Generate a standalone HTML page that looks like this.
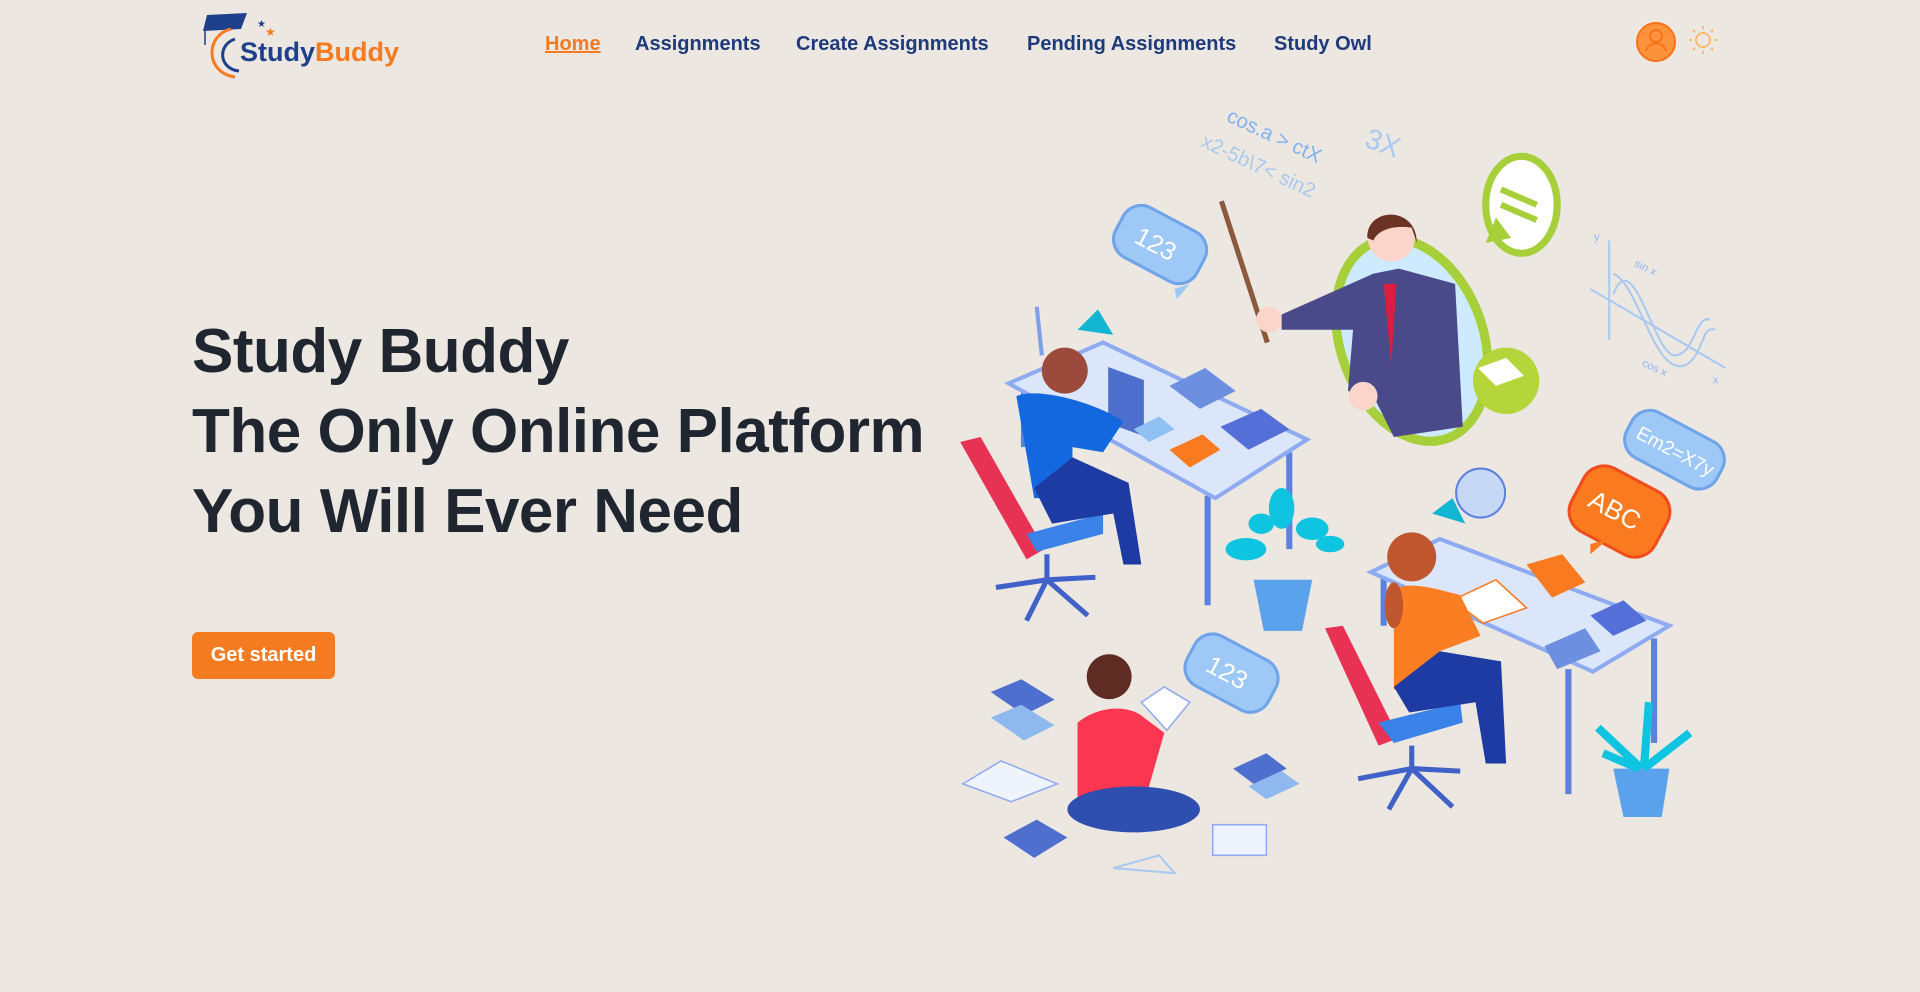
<!DOCTYPE html>
<html><head><meta charset="utf-8"><style>
*{margin:0;padding:0;box-sizing:border-box}
body{width:1920px;height:992px;background:#ece7e1;font-family:"Liberation Sans",sans-serif;position:relative;overflow:hidden}
.nav a{position:absolute;top:33px;font-size:20px;font-weight:bold;color:#1e3a7b;text-decoration:none;white-space:nowrap}
h1{position:absolute;left:192px;top:312px;font-size:62px;line-height:80px;font-weight:bold;color:#1f2630;letter-spacing:-0.5px}
.btn{position:absolute;left:192px;top:632px;width:143px;height:47px;background:#f47b20;border-radius:6px;color:#fff;font-weight:bold;font-size:20px;text-align:center;line-height:47px}
</style></head><body>
<svg style="position:absolute;left:195px;top:5px" width="220" height="80" viewBox="0 0 220 80">
<polygon points="12,10 52,8 46,24 8,26" fill="#1e3f8a"/>
<line x1="10" y1="26" x2="10" y2="40" stroke="#1e3f8a" stroke-width="1.5"/>
<path d="M36 24 C10 30 10 68 40 72" stroke="#f47b20" stroke-width="3" fill="none"/>
<path d="M40 34 C22 40 24 64 44 66" stroke="#1e3f8a" stroke-width="3" fill="none"/>
<text x="62" y="22" fill="#1e3f8a" font-size="10">★</text>
<text x="70" y="31" fill="#f47b20" font-size="12">★</text>
<text x="45" y="56" font-size="27" font-weight="bold" fill="#1e3f8a" font-family="Liberation Sans">Study<tspan fill="#f47b20">Buddy</tspan></text>
</svg>
<div class="nav">
<a style="left:545px;color:#f47b20;text-decoration:underline">Home</a>
<a style="left:635px">Assignments</a>
<a style="left:796px">Create Assignments</a>
<a style="left:1027px">Pending Assignments</a>
<a style="left:1274px">Study Owl</a>
</div>
<svg style="position:absolute;left:1630px;top:16px" width="90" height="52" viewBox="0 0 90 52">
<circle cx="26" cy="26" r="19" fill="#fb923c" stroke="#f97316" stroke-width="2"/>
<circle cx="26" cy="20" r="6" fill="none" stroke="#f97316" stroke-width="2"/>
<path d="M16 35 C18 25 34 25 36 35" fill="none" stroke="#f97316" stroke-width="2"/>
<circle cx="73" cy="24" r="7" fill="none" stroke="#fdba74" stroke-width="2"/>
<g stroke="#fdba74" stroke-width="2"><line x1="73" y1="10" x2="73" y2="13"/><line x1="73" y1="35" x2="73" y2="38"/><line x1="59" y1="24" x2="62" y2="24"/><line x1="84" y1="24" x2="87" y2="24"/><line x1="63" y1="14" x2="65" y2="16"/><line x1="81" y1="32" x2="83" y2="34"/><line x1="63" y1="34" x2="65" y2="32"/><line x1="81" y1="16" x2="83" y2="14"/></g>
</svg>
<h1>Study Buddy<br>The Only Online Platform<br>You Will Ever Need</h1>
<div class="btn">Get started</div>

<svg style="position:absolute;left:950px;top:90px" width="800" height="800" viewBox="0 0 1568 1568" font-family="Liberation Sans">
<g fill="#7fb2ee" font-size="40">
<text x="540" y="60" transform="rotate(25 540 60)">cos.a &gt; ctX</text>
<text x="490" y="110" transform="rotate(25 490 110)" fill="#a9c9f0">x2-5b\7&lt; sin2</text>
<text x="810" y="110" font-size="56" transform="rotate(20 810 110)" fill="#a9c9f0">3X</text>
</g>
<g stroke="#a9c9f0" stroke-width="4" fill="none">
<line x1="1292" y1="295" x2="1292" y2="490"/><line x1="1255" y1="390" x2="1520" y2="545"/>
<path d="M1300 400 C1340 300 1380 520 1420 520 C1460 520 1460 440 1490 450"/>
<path d="M1300 360 C1350 380 1380 560 1440 540 C1480 520 1470 460 1500 470"/>
</g>
<g fill="#8fb9ee" font-size="22"><text x="1262" y="295">y</text><text x="1340" y="345" transform="rotate(25 1340 345)">sin x</text><text x="1355" y="540" transform="rotate(25 1355 540)">cos x</text><text x="1495" y="575">x</text></g>
<g transform="rotate(28 405 305)"><rect x="320" y="245" width="180" height="110" rx="40" fill="#9ec8f5" stroke="#6fa4ea" stroke-width="6"/><text x="360" y="320" font-size="50" fill="#fff">123</text></g>
<g transform="rotate(28 545 1145)"><rect x="460" y="1085" width="180" height="110" rx="40" fill="#9ec8f5" stroke="#6fa4ea" stroke-width="6"/><text x="500" y="1160" font-size="50" fill="#fff">123</text></g>
<g transform="rotate(28 1420 705)"><rect x="1320" y="655" width="200" height="100" rx="40" fill="#9ec8f5" stroke="#6fa4ea" stroke-width="6"/><text x="1340" y="720" font-size="38" fill="#fff">Em2=X7y</text></g>
<g transform="rotate(28 1310 825)"><rect x="1220" y="755" width="185" height="140" rx="45" fill="#f97a1f" stroke="#f24c1c" stroke-width="6"/><text x="1250" y="845" font-size="52" fill="#fff">ABC</text></g>
<polygon points="440,390 470,380 445,410" fill="#9ec8f5"/>
<polygon points="1255,890 1290,880 1255,910" fill="#f97a1f"/>
<ellipse cx="905" cy="490" rx="140" ry="205" transform="rotate(-20 905 490)" fill="#cdeaff" stroke="#a6cf3a" stroke-width="18"/>
<ellipse cx="1120" cy="225" rx="70" ry="95" fill="#fff" stroke="#a6cf3a" stroke-width="14"/>
<polygon points="1050,300 1070,250 1100,290" fill="#a6cf3a"/>
<g stroke="#a6cf3a" stroke-width="12"><line x1="1080" y1="195" x2="1150" y2="225"/><line x1="1080" y1="225" x2="1150" y2="255"/></g>
<polygon points="650,440 830,360 880,350 990,380 1005,660 870,680 830,600 780,590 790,470 650,470" fill="#4a4a8a"/>
<polygon points="850,380 875,380 865,540" fill="#d91e3f"/>
<circle cx="865" cy="290" r="46" fill="#fbd5c9"/>
<path d="M818 290 C815 230 915 225 915 300 L905 270 C880 265 840 270 830 295 Z" fill="#6b3323"/>
<line x1="532" y1="218" x2="622" y2="495" stroke="#8b5a3c" stroke-width="10"/>
<circle cx="625" cy="450" r="25" fill="#fbd5c9"/>
<circle cx="810" cy="600" r="28" fill="#fbd5c9"/>
<circle cx="1090" cy="570" r="65" fill="#b5d63a"/>
<polygon points="1035,545 1090,525 1125,560 1070,580" fill="#fff"/>
<g stroke="#5b82de" stroke-width="12"><line x1="505" y1="795" x2="505" y2="1010"/><line x1="665" y1="710" x2="665" y2="900"/><line x1="145" y1="590" x2="145" y2="700"/></g>
<polygon points="115,575 300,495 700,685 520,800" fill="#dbe6fb" stroke="#8eaaf0" stroke-width="8"/>
<g fill="#4f6fcf"><rect x="310" y="430" width="70" height="110" transform="skewY(20)"/></g>
<polygon points="430,580 500,545 560,590 490,625" fill="#6d8fe0"/>
<polygon points="530,660 610,625 665,665 585,705" fill="#5470d8"/>
<polygon points="430,705 495,675 530,705 470,740" fill="#f97a1f"/>
<polygon points="360,665 410,640 440,665 390,690" fill="#8fc2f2"/>
<path d="M170 425 L180 520" stroke="#7da0e8" stroke-width="8"/>
<polygon points="250,470 290,430 320,480" fill="#12b5d2"/>
<path d="M20 690 L60 680 L185 900 L150 920 Z" fill="#e83253"/>
<path d="M150 870 L300 830 L300 870 L170 905 Z" fill="#3b82e8"/>
<g stroke="#4062c8" stroke-width="10"><line x1="190" y1="910" x2="190" y2="960"/><line x1="190" y1="960" x2="90" y2="975"/><line x1="190" y1="960" x2="285" y2="955"/><line x1="190" y1="960" x2="150" y2="1040"/><line x1="190" y1="960" x2="270" y2="1030"/></g>
<path d="M130 600 C180 580 300 620 340 650 L300 710 L240 700 L240 800 L165 800 Z" fill="#1368e0"/>
<path d="M165 780 L240 720 L350 770 L375 930 L340 930 L320 830 L200 850 Z" fill="#1e3aa3"/>
<circle cx="225" cy="550" r="45" fill="#9b4a3c"/>
<path d="M595 960 L710 960 L690 1060 L615 1060 Z" fill="#5aa2ec"/>
<g fill="#0fc4e0"><ellipse cx="650" cy="820" rx="25" ry="40"/><ellipse cx="580" cy="900" rx="40" ry="22"/><ellipse cx="710" cy="860" rx="32" ry="22"/><ellipse cx="745" cy="890" rx="28" ry="16"/><ellipse cx="610" cy="850" rx="25" ry="20"/></g>
<g stroke="#5b82de" stroke-width="12"><line x1="1212" y1="1135" x2="1212" y2="1380"/><line x1="1380" y1="1075" x2="1380" y2="1280"/><line x1="850" y1="950" x2="850" y2="1050"/></g>
<polygon points="825,945 960,880 1410,1050 1260,1140" fill="#dbe6fb" stroke="#8eaaf0" stroke-width="8"/>
<circle cx="1040" cy="790" r="48" fill="#c6d8f5" stroke="#5b82de" stroke-width="4"/>
<polygon points="945,830 985,800 1010,850" fill="#12b5d2"/>
<polygon points="1130,930 1200,910 1245,965 1180,995" fill="#f97a1f"/>
<polygon points="1165,1090 1245,1055 1275,1100 1190,1135" fill="#6d8fe0"/>
<polygon points="1255,1030 1320,1000 1365,1040 1300,1070" fill="#5470d8"/>
<polygon points="985,1000 1070,960 1130,1015 1045,1045" fill="#fff" stroke="#f97a1f" stroke-width="3"/>
<path d="M735 1055 L770 1050 L880 1270 L840 1285 Z" fill="#e83253"/>
<path d="M840 1240 L1000 1200 L1005 1240 L870 1280 Z" fill="#3b82e8"/>
<g stroke="#4062c8" stroke-width="10"><line x1="905" y1="1285" x2="905" y2="1330"/><line x1="905" y1="1330" x2="800" y2="1350"/><line x1="905" y1="1330" x2="1000" y2="1335"/><line x1="905" y1="1330" x2="860" y2="1410"/><line x1="905" y1="1330" x2="985" y2="1405"/></g>
<path d="M870 980 C900 960 960 980 1000 990 L1040 1070 L960 1100 L960 1170 L870 1175 Z" fill="#fb7e22"/>
<path d="M870 1170 L960 1100 L1080 1120 L1090 1320 L1050 1320 L1030 1200 L900 1220 Z" fill="#1e3aa3"/>
<circle cx="905" cy="915" r="48" fill="#c0562e"/>
<ellipse cx="870" cy="1010" rx="18" ry="45" fill="#c0562e"/>
<path d="M1300 1330 L1410 1330 L1395 1425 L1320 1425 Z" fill="#5aa2ec"/>
<g stroke="#0fc4e0" stroke-width="16" fill="none"><path d="M1355 1330 L1270 1250"/><path d="M1360 1330 L1370 1200"/><path d="M1360 1330 L1450 1260"/><path d="M1350 1330 L1280 1300"/></g>
<path d="M250 1240 C300 1200 360 1210 380 1230 L420 1260 L380 1400 L250 1410 Z" fill="#fb3650"/>
<ellipse cx="360" cy="1410" rx="130" ry="45" fill="#2f4fb0"/>
<circle cx="312" cy="1150" r="44" fill="#5e2c22"/>
<polygon points="375,1200 420,1170 470,1200 425,1255" fill="#fff" stroke="#8eaaf0" stroke-width="3"/>
<polygon points="80,1180 140,1155 205,1195 145,1225" fill="#4f6fcf"/>
<polygon points="80,1230 140,1205 205,1245 145,1275" fill="#8fb9ee"/>
<polygon points="105,1465 170,1430 230,1465 165,1505" fill="#4f6fcf"/>
<polygon points="555,1330 620,1300 660,1330 595,1360" fill="#4f6fcf"/>
<polygon points="585,1365 650,1335 685,1360 620,1390" fill="#8fb9ee"/>
<polygon points="25,1360 100,1315 210,1360 120,1395" fill="#eef3fc" stroke="#8eaaf0" stroke-width="3"/>
<rect x="515" y="1440" width="105" height="60" fill="#eef3fc" stroke="#8eaaf0" stroke-width="3"/>
<polygon points="320,1525 410,1500 440,1535" fill="none" stroke="#a9c9f0" stroke-width="4"/>
</svg>
</body></html>
